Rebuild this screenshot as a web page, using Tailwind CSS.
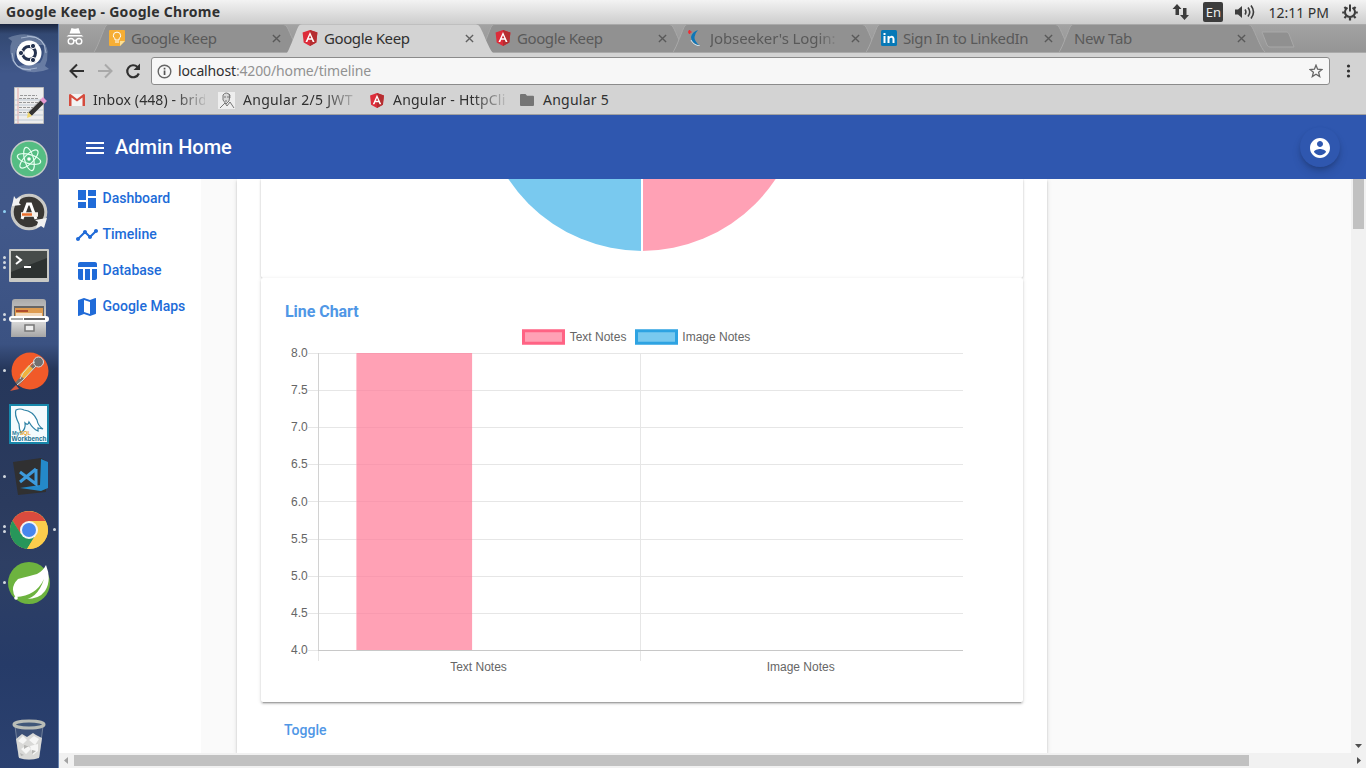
<!DOCTYPE html>
<html lang="en">
<head>
<meta charset="utf-8">
<title>Google Keep</title>
<script src="https://cdn.jsdelivr.net/npm/@tailwindcss/browser@4"></script>
</head>
<body class="w-[1366px] h-[768px] overflow-hidden flex flex-col bg-white font-['Noto_Sans',sans-serif] text-[15px]">
<svg class="absolute size-0">
  <defs>
    <symbol id="ng" viewBox="0 0 16 16"><path fill="#dd2c3a" d="M8 0 .6 2.6l1.1 9.8L8 16l6.3-3.600L15.400 2.600z"/><path fill="#b52e31" d="M8 0v16l6.300-3.600L15.400 2.600z"/><path fill="#fff" fill-rule="evenodd" d="M8 1.900 3.500 12h1.800l.9-2.200h3.600l.9 2.200h1.800zM8 5.200l1.300 3.100H6.700z"/></symbol>
    <symbol id="x" viewBox="0 0 10 10"><path d="M1 1l8 8M9 1 1 9" stroke="currentColor" stroke-width="1.500" fill="none"/></symbol>
    <symbol id="tab" viewBox="0 0 206 28"><path d="M0 28C3 25 10 4 12 1.500Q13 .5 15 .5H189Q192 .5 193 3C196 8 202 25 206 28z" fill="#919191"/><path d="M0 28C3 25 10 4 12 1.500Q13 .5 15 .5H189Q192 .5 193 3C196 8 202 25 206 28" fill="none" stroke="#a9a9a9"/></symbol>
    <linearGradient id="metal" x2="0" y2="1"><stop stop-color="#aaa"/><stop offset=".6" stop-color="#d8d8d8"/><stop offset="1" stop-color="#a5a5a5"/></linearGradient>
  </defs>
</svg>

<!-- desktop panel -->
<header class="h-6 shrink-0 flex items-center bg-gradient-to-b from-[#f3f3f3] to-[#cdcdcd] text-[#303030] pl-[6px] pr-2">
  <div class="font-bold text-[14px] leading-6 whitespace-nowrap tracking-[0.28px]">Google Keep - Google Chrome</div>
  <svg class="ml-auto" width="18" height="18" viewBox="0 0 18 18" fill="#3c3c3c"><path d="M5 1l4.500 5H7v6H3.500V6H.5zM12.500 17 8 12h3V5h3.500v7H17z"/></svg>
  <div class="ml-[13px] w-5 h-5 rounded-[2px] bg-[#3c3c3c] text-[#eee] text-[13px] leading-5 text-center">En</div>
  <svg class="ml-[12px]" width="20" height="18" viewBox="0 0 20 18"><path fill="#3c3c3c" d="M0 6.500h3l4-3.500v12l-4-3.500H0z"/><path fill="none" stroke="#3c3c3c" stroke-width="1.600" d="M10 6.500q1.800 2.500 0 5M13 4.500q3.500 4.500 0 9M16 2.500q5 6.500 0 13"/></svg>
  <div class="ml-[13px] text-[14px] whitespace-nowrap">12:11 PM</div>
  <svg class="ml-[13px]" width="16" height="18" viewBox="0 0 16 18" fill="none" stroke="#3c3c3c"><path stroke-width="2" d="M5.500 4.700a5 5 0 1 0 5 0M8 1.500v7"/><path stroke-width="2.200" d="M.2 9.500h2.500M13.300 9.500h2.500M8 14.500v3M2.400 4l1.800 1.700M13.600 4l-1.800 1.700M2.400 15l1.800-1.700M13.600 15l-1.800-1.700"/></svg>
</header>

<div class="flex flex-1 min-h-0">
  <!-- launcher -->
  <aside class="w-[59px] shrink-0 flex flex-col items-center pt-[2px] pb-[7px] border-r border-[#6681ad] bg-[linear-gradient(180deg,#1b2640_0px,#334973_10px,#40578a_50px,#41588a_200px,#3b5282_320px,#26375b_345px,#2b3b5e_480px,#2e3f64_540px,#263b68_640px,#2b4170_744px)]">
    <div class="h-[53px] flex items-center"><svg width="44" height="44" viewBox="0 0 44 44"><g fill="#b9c8de" opacity=".35"><path d="M1 7Q16 0 31 6q9 6 10 16L36 14 12 14Q6 22 8 34 0 20 5 10zM42 38Q28 44 15 39 5 34 4 25l7 10 22-3q6-8 3-22 8 12 2 25z"/></g><path fill="none" stroke="#b9c8de" stroke-opacity=".7" d="M20 5q18 0 19 17M24 39Q6 40 5 22M14 7q18-5 24 8M30 37q-18 5-24-8"/><circle cx="22" cy="22" r="12.500" fill="#fff"/><circle cx="22" cy="22" r="6.500" fill="none" stroke="#25324f" stroke-width="3"/><g fill="#25324f" stroke="#fff"><circle cx="14" cy="22" r="2.600"/><circle cx="26" cy="15" r="2.600"/><circle cx="26" cy="29" r="2.600"/></g></svg></div>
    <div class="h-[53px] flex items-center"><svg width="44" height="44" viewBox="0 0 44 44"><path fill="#ededed" stroke="#bbb" d="M7.500 3.500h29v36h-29z"/><path stroke="#e5a5a5" d="M11 4v36"/><path stroke="#c0cbd5" d="M8 16h28M8 21h28M8 26h28M8 31h28M8 36h28"/><path stroke="#999" stroke-dasharray="3 1" d="M13 11.500h17M12 14.500h20M12 18.500h20M12 23.500h14M12 28.500h9"/><path stroke="#333" stroke-width="5" d="M23 30 36 17"/><path stroke="#888" d="M22 28 35 15"/><path stroke="#e69ad0" stroke-width="5.500" d="M35 18l3-3"/><path fill="#efd66c" d="m20 34 1-6 4 4z"/></svg></div>
    <div class="h-[53px] flex items-center"><svg width="44" height="44" viewBox="0 0 44 44"><circle cx="22" cy="22" r="18" fill="#55bd83" stroke="#c4ccc8" stroke-width="1.500"/><g fill="none" stroke="#e5fff0" stroke-width="1.200"><ellipse cx="22" cy="22" rx="12" ry="4.500" transform="rotate(15 22 22)"/><ellipse cx="22" cy="22" rx="12" ry="4.500" transform="rotate(75 22 22)"/><ellipse cx="22" cy="22" rx="12" ry="4.500" transform="rotate(135 22 22)"/></g><circle cx="22" cy="22" r="1.800" fill="#fff"/></svg></div>
    <div class="h-[53px] flex items-center relative"><svg width="44" height="44" viewBox="0 0 44 44"><circle cx="22" cy="22" r="16.800" fill="#393734" stroke="#c9c9c6" stroke-width="3"/><path fill="#f1f1f1" d="M5 16 7 6l2 3 5-2-2 6 2 2zM40 28l-3 10-3-2-5 2 2-6-3-2z"/><path d="M15 29 20.500 14h3L29 29" fill="none" stroke="#fff" stroke-width="3"/><path stroke="#f5efe9" stroke-width="4.500" d="M14 24.500h17"/><path stroke="#eb702e" stroke-width="2.500" d="M15 24.500h10"/></svg><span class="absolute -left-[4px] size-[3px] rounded-full bg-[#8fd0f2]"></span></div>
    <div class="h-[53px] flex items-center relative"><svg width="44" height="44" viewBox="0 0 44 44"><path fill="#c8c9c5" d="M2 7q0-1 1-1h38q1 0 1 1v31q0 1-1 1H3q-1 0-1-1z"/><path fill="#2d3231" d="M4 8h36v27H4z"/><path fill="#474c4a" d="M4 8h36v7L4 29z"/><path fill="none" stroke="#fff" stroke-width="2" d="m9 13 5 4-5 4M17 24h7"/></svg><span class="absolute -left-[4px] top-[18px] w-[3px] h-[13px] flex flex-col justify-between"><i class="size-[3px] rounded-full bg-[#d2d8df]"></i><i class="size-[3px] rounded-full bg-[#d2d8df]"></i><i class="size-[3px] rounded-full bg-[#d2d8df]"></i></span></div>
    <div class="h-[53px] flex items-center relative"><svg width="44" height="44" viewBox="0 0 44 44"><path fill="url(#metal)" d="M5 6q0-3 3-3h28q3 0 3 3v35H4z"/><path fill="#666" d="M7 10h30v10H7z"/><path fill="#de9c51" d="M8 12h28v9H8z"/><path fill="#b04d2c" d="M9 14h12v2H9z"/><path fill="#f3dabd" d="M9 17h26v3H9z"/><rect x="2" y="20" width="40" height="6" rx="3" fill="#fff"/><path fill="#aaa" d="M4 22h12v2H4z"/><path fill="#666" d="M17 22h21v2H17z"/><path fill="#eee" stroke="#777" stroke-width="1.500" d="M18 29h9v6h-9z"/></svg><span class="absolute -left-[4px] top-[22px] w-[3px] h-[8px] flex flex-col justify-between"><i class="size-[3px] rounded-full bg-[#d2d8df]"></i><i class="size-[3px] rounded-full bg-[#d2d8df]"></i></span></div>
    <div class="h-[53px] flex items-center relative"><svg width="44" height="44" viewBox="0 0 44 44"><circle cx="23" cy="22" r="18.500" fill="#f15a29"/><path d="m10 35 11-12 9-9" stroke="#77706a" stroke-width="4.500"/><path stroke="#f0b23d" stroke-width="6" d="m15 28 9-10"/><circle cx="31.500" cy="13" r="5" fill="#707070" stroke="#ddd"/><path stroke="#ddd" fill="none" d="m10 36 6-5 13-14M13 30l3-6 9-10 3-1"/><path fill="#d6573e" d="m3 42 6-6 3 4z"/></svg><span class="absolute -left-[4px] size-[3px] rounded-full bg-[#d2d8df]"></span></div>
    <div class="h-[53px] flex items-center"><svg class="overflow-visible" width="44" height="44" viewBox="0 0 44 44"><path fill="#f3fafd" stroke="#1888ab" stroke-width="2" d="M3 3h38v38H3z"/><path fill="#fff" stroke="#2d81a4" stroke-width="1.200" d="M14 31q-2-4-2-9Q7 12 9 8q4-2 8 0 9 1 13 10 1 6 6 9l-5-1v3q-5-2-9-9-1 4-4 1 1 6-4 10z"/><text x="5" y="33" font-family="Liberation Sans" font-size="5.500" font-weight="bold" fill="#297c9d">My<tspan fill="#eba227">SQL</tspan></text><text x="4.500" y="39" textLength="35" lengthAdjust="spacingAndGlyphs" font-family="Liberation Sans" font-size="7" font-weight="bold" fill="#186c8a">Workbench</text></svg></div>
    <div class="h-[53px] flex items-center relative"><svg width="44" height="44" viewBox="0 0 44 44"><path fill="#303031" d="m6 7 28-4 5 3v31L11 40z"/><path fill="#2489ca" d="m34 4 7 3v26l-7 3-21-3 20-3z"/><path fill="none" stroke="#3d9bdd" stroke-width="3" d="M29 14v15L13 17M29 14 13 27"/></svg><span class="absolute -left-[4px] size-[3px] rounded-full bg-[#d2d8df]"></span></div>
    <div class="h-[53px] flex items-center relative"><svg width="44" height="44" viewBox="0 0 44 44"><circle cx="22" cy="22" r="19" fill="#fccd4c"/><path fill="#d94b3e" d="M5.500 12.500A19 19 0 0 1 38.500 13H22L13 25z"/><path fill="#27965a" d="M5.500 12.500A19 19 0 0 0 20 41l9-15-15 0z"/><path fill="#fccd4c" d="M22 13h16.500A19 19 0 0 1 20 41l9-14z"/><circle cx="22" cy="22" r="9" fill="#f4f4f4"/><circle cx="22" cy="22" r="7" fill="#4786ed"/></svg><span class="absolute -left-[4px] top-[22px] w-[3px] h-[8px] flex flex-col justify-between"><i class="size-[3px] rounded-full bg-[#d2d8df]"></i><i class="size-[3px] rounded-full bg-[#d2d8df]"></i></span><span class="absolute -right-[5px] size-[3px] rounded-full bg-[#d2d8df]"></span></div>
    <div class="h-[53px] flex items-center relative"><svg width="44" height="44" viewBox="0 0 44 44"><circle cx="22" cy="22" r="21" fill="#6db33f"/><path fill="#fff" d="M39 4q6 15-1 26-8 11-29 7-7-10 2-19Q23 15 30 13q6-3 9-9z"/><path fill="#6db33f" d="M9 36q20-1 28-18-7 22-25 21z"/><circle cx="9" cy="37" r="1.800" fill="#fff"/></svg><span class="absolute -left-[4px] size-[3px] rounded-full bg-[#d2d8df]"></span></div>
    <div class="mt-auto"><svg width="44" height="44" viewBox="0 0 44 44"><path fill="#3b4f76" stroke="#71819b" d="m8 9 4 31q10 4 20 0l4-31z"/><path fill="#d9d9d7" d="m9 22 6-5 5 3 6-4 3 2 6 3-3 20q-10 3-20 0z"/><path fill="#f6f6f5" d="m11 24 5-5 4 4-4 4zm11-1 5-4 5 3-4 6zm-8 9 6-4 4 4-5 5zm9-3 8-2v7l-5 4z"/><path fill="#b5b5b3" d="m17 28 5 1-5 3zm8 5 4 1-4 3zm-12 3 4 2-3 1z"/><ellipse cx="22" cy="7.500" rx="15" ry="3.500" fill="#405779" stroke="#b9bdb7" stroke-width="3"/></svg></div>
  </aside>

  <!-- browser window -->
  <main class="flex-1 min-w-0 flex flex-col">
    <div class="h-[29px] shrink-0 flex items-end bg-gradient-to-b from-[#a2a2a2] to-[#959595] border-b border-[#aaa] text-[#595959] border-t border-t-[#aaa]">
      <svg class="w-[35px] h-[28px] shrink-0" viewBox="0 0 35 28"><path fill="#fff" d="M12.500 4q3.500 1.500 7 0l2 5.500h-11zM7.500 12.500l2-1.500h13l2 1.500z"/><g fill="none" stroke="#fff" stroke-width="1.400"><circle cx="12" cy="17.300" r="2.800"/><circle cx="20" cy="17.300" r="2.800"/><path d="M15 16.500h2"/></g></svg>
      <div class="relative w-[206px] h-7 shrink-0 flex items-center pl-[15px] pr-[19px]"><svg class="absolute inset-0 w-[206px] h-7"><use href="#tab"/></svg>
        <svg class="relative" width="16" height="16" viewBox="0 0 16 16"><path fill="#f6ae35" d="M1 0h14q1 0 1 1v10l-5 5H1q-1 0-1-1V1q0-1 1-1z"/><path fill="#fcdf95" d="M11 16v-5h5z"/><path fill="none" stroke="#fff" d="M6 10V8.500Q4.300 7.500 4.300 5.800a3.700 3.700 0 0 1 7.400 0q0 1.700-1.700 2.700V10zM6 12h4"/></svg>
        <span class="relative ml-1.5 whitespace-nowrap leading-none tracking-[-0.4px]">Google Keep</span><svg class="relative ml-auto size-[9px]"><use href="#x"/></svg></div>
      <div class="relative z-10 w-[206px] h-7 shrink-0 -ml-[13px] flex items-center pl-[15px] pr-[19px] text-[#303030]"><svg class="absolute inset-0 w-[206px] h-7 overflow-visible" viewBox="0 0 206 28"><path d="M0 29C3 25 10 4 12 1.500Q13 .5 15 .5H189Q192 .5 193 3C196 8 202 25 206 29z" fill="#d3d3d3"/></svg>
        <svg class="relative size-4"><use href="#ng"/></svg><span class="relative ml-1.5 whitespace-nowrap leading-none tracking-[-0.4px]">Google Keep</span><svg class="relative ml-auto size-[9px] text-[#606060]"><use href="#x"/></svg></div>
      <div class="relative w-[206px] h-7 shrink-0 -ml-[13px] flex items-center pl-[15px] pr-[19px]"><svg class="absolute inset-0 w-[206px] h-7"><use href="#tab"/></svg>
        <svg class="relative size-4"><use href="#ng"/></svg><span class="relative ml-1.5 whitespace-nowrap leading-none tracking-[-0.4px]">Google Keep</span><svg class="relative ml-auto size-[9px]"><use href="#x"/></svg></div>
      <div class="relative w-[206px] h-7 shrink-0 -ml-[13px] flex items-center pl-[15px] pr-[19px]"><svg class="absolute inset-0 w-[206px] h-7"><use href="#tab"/></svg>
        <svg class="relative" width="16" height="16" viewBox="0 0 16 16"><path fill="#0d76b8" d="M10 0Q4 2 3 7q0 6 9 9Q6 11 6.500 7 7 3 10 0z"/><path stroke="#d5e6ef" fill="none" d="M3 10q2 5 9 6"/><path stroke="#f02b32" stroke-width="1.500" d="M1.500 0v4M-.5 2h4"/></svg>
        <span class="relative ml-1.5 w-[130px] shrink-0 whitespace-nowrap leading-5 tracking-[-0.1px] [mask-image:linear-gradient(90deg,#000_108px,transparent_131px)]">Jobseeker's Login:</span><svg class="relative ml-auto size-[9px] shrink-0"><use href="#x"/></svg></div>
      <div class="relative w-[206px] h-7 shrink-0 -ml-[13px] flex items-center pl-[15px] pr-[19px]"><svg class="absolute inset-0 w-[206px] h-7"><use href="#tab"/></svg>
        <svg class="relative" width="16" height="16" viewBox="0 0 16 16"><rect width="16" height="16" rx="1.500" fill="#0779b7"/><path fill="#fff" d="M2.500 6h2v7h-2zM2.500 3h2v2h-2zM6.500 6h2v1q2-2 4-.5 1 1 1 2.500v4h-2V9q0-1.500-1.500-1.300Q8.500 8 8.500 9v4h-2z"/></svg>
        <span class="relative ml-1.5 whitespace-nowrap leading-none tracking-[-0.37px]">Sign In to LinkedIn</span><svg class="relative ml-auto size-[9px]"><use href="#x"/></svg></div>
      <div class="relative w-[206px] h-7 shrink-0 -ml-[13px] flex items-center pl-[15px] pr-[19px]"><svg class="absolute inset-0 w-[206px] h-7"><use href="#tab"/></svg>
        <span class="relative whitespace-nowrap leading-none tracking-[-0.3px]">New Tab</span><svg class="relative ml-auto size-[9px]"><use href="#x"/></svg></div>
      <svg class="-ml-[4px] mb-[4px]" width="35" height="17" viewBox="0 0 35 17"><path fill="#909090" stroke="#a8a8a8" d="M1 1h25q1 0 2 2l5 13H9q-2 0-3-2z"/></svg>
    </div>

    <!-- address row -->
    <div class="h-[33px] shrink-0 bg-[#d3d3d3] flex items-center pt-[3px] pl-[9px] pr-[15px]">
      <svg width="18" height="18" viewBox="0 0 18 18" fill="none" stroke="#303030" stroke-width="2"><path d="M16 9H3M9 2.500 2.500 9 9 15.500"/></svg>
      <svg class="ml-[10px]" width="18" height="18" viewBox="0 0 18 18" fill="none" stroke="#a9a9a9" stroke-width="2"><path d="M2 9h13M9 2.500 15.500 9 9 15.500"/></svg>
      <svg class="ml-[10px]" width="18" height="18" viewBox="0 0 18 18"><path fill="none" stroke="#303030" stroke-width="2.200" d="M14.800 11.500A6 6 0 1 1 13.500 5"/><path fill="#303030" d="M16 1.500V8H9.500z"/></svg>
      <div class="ml-[9px] flex-1 h-7 rounded-[3px] border border-[#8b8b8b] bg-[#f7f7f7] flex items-center pl-[5px] pr-1.5">
        <svg width="15" height="15" viewBox="0 0 15 15"><circle cx="7.500" cy="7.500" r="6.300" fill="none" stroke="#666" stroke-width="1.400"/><path fill="#555" d="M6.700 6.500h1.700V11H6.700zM6.700 3.700h1.700v1.700H6.700z"/></svg>
        <span class="ml-[6px] text-[14px] leading-none text-[#929292] whitespace-nowrap tracking-[-0.14px]"><span class="text-[#303030]">localhost</span>:4200/home/timeline</span>
        <svg class="ml-auto" width="14" height="14" viewBox="0 0 14 14"><path fill="none" stroke="#666" stroke-width="1.300" d="m7 1.200 1.600 4 4.400.3-3.400 2.800 1.100 4.300L7 10.200l-3.700 2.400 1.100-4.300L1 5.500l4.400-.3z"/></svg>
      </div>
      <svg class="ml-[16px]" width="5" height="14" viewBox="0 0 5 14" fill="#303030"><circle cx="2.500" cy="2" r="1.600"/><circle cx="2.500" cy="7" r="1.600"/><circle cx="2.500" cy="12" r="1.600"/></svg>
    </div>

    <!-- bookmarks -->
    <div class="h-[29px] shrink-0 bg-[#d3d3d3] border-b border-[#a0a0a0] flex items-center text-[#303030] text-[14px] pl-[10px] leading-6">
      <svg width="16" height="12" viewBox="0 0 16 12"><path fill="#f3f3f3" d="M1 0h14v12H1z"/><path fill="#d54b3d" d="M0 1q0-1 1.500-1L8 5l6.500-5Q16 0 16 1v11h-2.500V3.500L8 7.500l-5.500-4V12H0z"/></svg>
      <span class="ml-2 w-[112px] whitespace-nowrap tracking-[0.1px] [mask-image:linear-gradient(90deg,#000_80px,transparent_118px)]">Inbox (448) - brid</span>
      <svg class="ml-[13px]" width="17" height="17" viewBox="0 0 17 17"><path fill="#eee" d="M0 0h17v17H0z"/><path fill="#dadada" stroke="#777" d="M5 3q3-4 7 0l-1 6-3 3-3-4z"/><path stroke="#777" fill="none" d="M6 5h2m1 0h2M7 9h2M2 16l5-5 2 3 3-4 4 6M11 2l1 4"/></svg>
      <span class="ml-[8px] w-[112px] whitespace-nowrap tracking-[0.3px] [mask-image:linear-gradient(90deg,#000_80px,transparent_118px)]">Angular 2/5 JWT</span>
      <svg class="ml-[14px] w-4 h-[15px]"><use href="#ng"/></svg>
      <span class="ml-2 w-[113px] whitespace-nowrap tracking-[0.2px] [mask-image:linear-gradient(90deg,#000_80px,transparent_118px)]">Angular - HttpCli</span>
      <svg class="ml-[14px]" width="14" height="12" viewBox="0 0 14 12"><path fill="#757575" d="M1 0h4.500L7 1.800h6q1 0 1 1V11q0 1-1 1H1q-1 0-1-1V1q0-1 1-1z"/></svg>
      <span class="ml-[9px] whitespace-nowrap tracking-[0.25px]">Angular 5</span>
    </div>

    <!-- app toolbar -->
    <div class="h-16 shrink-0 bg-[#2f57af] text-white flex items-center pl-6 pr-[26px] font-['Roboto',sans-serif] overflow-hidden">
      <svg class="size-6 mt-[1px]" viewBox="0 0 24 24" fill="currentColor"><path d="M3 18h18v-2H3v2zm0-5h18v-2H3v2zm0-7v2h18V6H3z"/></svg>
      <h1 class="ml-2 text-[20px] font-medium">Admin Home</h1>
      <button class="ml-auto size-10 rounded-full bg-[#2f57af] flex items-center justify-center shadow-[0_3px_5px_-1px_rgba(0,0,0,.2),0_6px_10px_0_rgba(0,0,0,.1)]"><svg class="size-6 mt-[1px]" viewBox="0 0 24 24" fill="currentColor"><path d="M12 2C6.480 2 2 6.480 2 12s4.480 10 10 10 10-4.480 10-10S17.520 2 12 2zm0 3c1.660 0 3 1.340 3 3s-1.340 3-3 3-3-1.340-3-3 1.340-3 3-3zm0 14.200c-2.500 0-4.710-1.280-6-3.220.03-1.990 4-3.080 6-3.080 1.990 0 5.970 1.090 6 3.080-1.290 1.940-3.500 3.220-6 3.220z"/></svg></button>
    </div>

    <!-- page viewport -->
    <div class="flex-1 min-h-0 flex bg-[#fafafa] font-['Roboto',sans-serif]">
      <nav class="w-[142px] shrink-0 bg-white pt-[1px] pl-4 text-[14px] font-medium text-[#206bd8]">
        <a class="h-9 flex items-center gap-[3.5px]"><svg class="size-6 mt-[2px]" viewBox="0 0 24 24" fill="currentColor"><path d="M3 13h8V3H3v10zm0 8h8v-6H3v6zm10 0h8V11h-8v10zm0-18v6h8V3h-8z"/></svg>Dashboard</a>
        <a class="h-9 flex items-center gap-[3.5px]"><svg class="size-6 mt-[2px]" viewBox="0 0 24 24" fill="currentColor"><path d="M23 8c0 1.100-.9 2-2 2-.18 0-.35-.02-.51-.07l-3.560 3.550c.05.16.07.34.07.52 0 1.100-.9 2-2 2s-2-.9-2-2c0-.18.02-.36.07-.52l-2.550-2.550c-.16.05-.34.07-.52.07s-.36-.02-.52-.07l-4.550 4.560c.05.16.07.33.07.51 0 1.100-.9 2-2 2s-2-.9-2-2 .9-2 2-2c.18 0 .35.02.51.07l4.560-4.550C8.020 9.360 8 9.180 8 9c0-1.100.9-2 2-2s2 .9 2 2c0 .18-.02.36-.07.52l2.550 2.550c.16-.05.34-.07.52-.07s.36.02.52.07l3.550-3.560C19.020 8.350 19 8.180 19 8c0-1.100.9-2 2-2s2 .9 2 2z"/></svg>Timeline</a>
        <a class="h-9 flex items-center gap-[3.5px]"><svg class="size-6 mt-[2px]" viewBox="0 0 24 24" fill="currentColor"><path d="M10 10.020h5V21h-5zM17 21h3c1.100 0 2-.9 2-2v-9h-5v11zm3-18H5c-1.100 0-2 .9-2 2v3h19V5c0-1.100-.9-2-2-2zM3 19c0 1.100.9 2 2 2h3V10H3v9z"/></svg>Database</a>
        <a class="h-9 flex items-center gap-[3.5px]"><svg class="size-6 mt-[2px]" viewBox="0 0 24 24" fill="currentColor"><path d="M20.500 3l-.16.03L15 5.100 9 3 3.360 4.900c-.21.07-.36.25-.36.48V20.500c0 .28.220.5.5.5l.16-.03L9 18.900l6 2.100 5.640-1.900c.21-.07.36-.25.36-.48V3.500c0-.28-.220-.5-.5-.5zM15 19l-6-2.110V5l6 2.110V19z"/></svg>Google Maps</a>
      </nav>
      <div class="flex-1 min-w-0 pl-9 overflow-hidden">
        <section class="w-[810px] h-full bg-white px-6 flex flex-col shadow-[0_3px_1px_-2px_rgba(0,0,0,.2),0_2px_2px_0_rgba(0,0,0,.14),0_1px_5px_0_rgba(0,0,0,.12)]">
          <div class="h-[99px] shrink-0 rounded-b-[2px] shadow-[0_1px_3px_rgba(0,0,0,.2),0_0_1px_rgba(0,0,0,.2)]">
            <svg class="block" width="762" height="99" viewBox="0 0 762 99"><path fill="#79c9ef" d="M381-89v161A161 161 0 0 1 220.500-89z"/><path fill="#ffa1b5" d="M381-89v161A161 161 0 0 0 541.500-89z"/><path stroke="#fff" stroke-width="2" d="M381 0v74"/></svg>
          </div>
          <div class="h-[424px] shrink-0 rounded-[2px] bg-white pt-6 shadow-[0_3px_1px_-2px_rgba(0,0,0,.2),0_2px_2px_0_rgba(0,0,0,.14),0_1px_4px_0_rgba(0,0,0,.12)]">
            <h2 class="pl-6 h-5 leading-5 text-[16px] font-bold tracking-[-0.05px] text-[#5097e6]">Line Chart</h2>
            <svg class="block" width="762" height="379" viewBox="261 322 762 379" font-family="Liberation Sans, sans-serif" font-size="12" fill="#666">
              <g stroke-width="3"><path fill="#ffa1b5" stroke="#ff6384" d="M523.500 330.800h40v12.500h-40z"/><path fill="#79c9ef" stroke="#2ea3e2" d="M636.500 330.800h40v12.500h-40z"/></g>
              <text x="569.700" y="341">Text Notes</text><text x="682.300" y="341">Image Notes</text>
              <path stroke="#e6e6e6" d="M308 353.500h655M308 390.500h655M308 427.500h655M308 464.500h655M308 501.500h655M308 539.500h655M308 576.500h655M308 613.500h655M308 650.500h10M640.500 353v308M318.500 650v11"/>
              <path fill="#ffa1b5" d="M356.400 353h115.700v297H356.400z"/>
              <path stroke="#f396ab" stroke-opacity=".6" d="M357 353.500h115M357 390.500h115M357 427.500h115M357 464.500h115M357 501.500h115M357 539.500h115M357 576.500h115M357 613.500h115"/>
              <path stroke="#c8c8c8" d="M318 650.500h645"/><path stroke="#d2d2d2" d="M318.500 353v297"/>
              <g text-anchor="end"><text x="307.700" y="357">8.0</text><text x="307.700" y="394">7.5</text><text x="307.700" y="431">7.0</text><text x="307.700" y="468">6.5</text><text x="307.700" y="506">6.0</text><text x="307.700" y="543">5.5</text><text x="307.700" y="580">5.0</text><text x="307.700" y="617">4.5</text><text x="307.700" y="654">4.0</text></g>
              <g text-anchor="middle"><text x="478.500" y="671">Text Notes</text><text x="800.700" y="671">Image Notes</text></g>
            </svg>
          </div>
          <div class="pl-[23px] pt-[18px] text-[14px] leading-5 font-medium text-[#5097e6]">Toggle</div>
        </section>
      </div>
      <div class="w-[15px] shrink-0 bg-[#f1f1f1] flex flex-col items-center justify-between pb-[5px]"><div class="w-[11px] h-[50px] bg-[#c1c1c1]"></div><svg width="7" height="4" viewBox="0 0 7 4"><path fill="#505050" d="M0 0h7L3.500 4z"/></svg></div>
    </div>
    <div class="h-[15px] shrink-0 bg-[#f1f1f1] flex items-center pl-[5px] pr-[5px]"><svg width="4" height="7" viewBox="0 0 4 7"><path fill="#a3a3a3" d="M4 0v7L0 3.500z"/></svg><div class="ml-[6px] w-[1175px] h-[11px] bg-[#c1c1c1]"></div><svg class="ml-auto" width="4" height="7" viewBox="0 0 4 7"><path fill="#505050" d="M0 0v7l4-3.500z"/></svg></div>
  </main>
</div>
</body>
</html>
